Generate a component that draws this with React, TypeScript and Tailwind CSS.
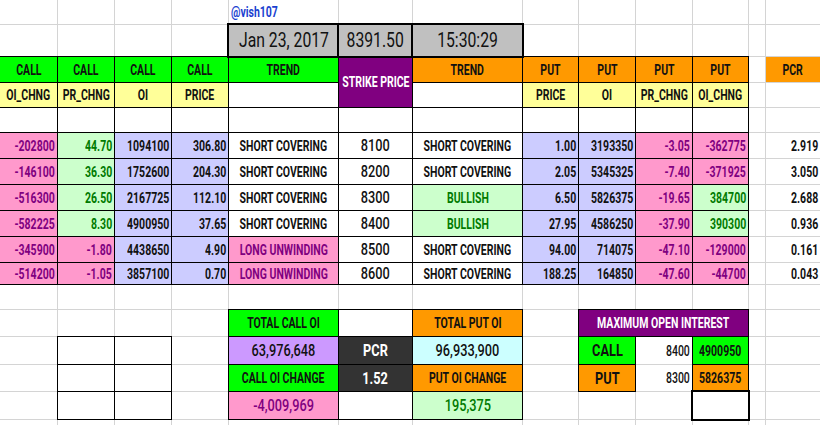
import React from 'react';
import clsx from 'clsx';

type Tone = 'none' | 'white' | 'green' | 'yellow' | 'pink' | 'mint' | 'lav' | 'purple' | 'orange' | 'gray' | 'dark' | 'violet' | 'cyan';
type Ink = 'ink' | 'plum' | 'leaf' | 'snow' | 'link';

interface CellSpec {
    text?: string;
    tone?: Tone;
    ink?: Ink;
    align?: 'l' | 'c' | 'r';
    size?: 'sm' | 'md' | 'lg' | 'xl';
    weight?: 'n' | 'm' | 'b';
    border?: 0 | 1 | 2;
    span?: string;
}

const toneClass: Record<Tone, string> = {
    none: 'bg-white',
    white: 'bg-white',
    green: 'bg-[#00ff00]',
    yellow: 'bg-[#ffff99]',
    pink: 'bg-[#ff99cc]',
    mint: 'bg-[#ccffcc]',
    lav: 'bg-[#ccccff]',
    purple: 'bg-[#800080]',
    orange: 'bg-[#ff9900]',
    gray: 'bg-[#c0c0c0]',
    dark: 'bg-[#333333]',
    violet: 'bg-[#cc99ff]',
    cyan: 'bg-[#ccffff]',
};

const inkClass: Record<Ink, string> = {
    ink: 'text-[#111111]',
    plum: 'text-[#800080]',
    leaf: 'text-[#007a00]',
    snow: 'text-white',
    link: 'text-[#1a3fd0]',
};

const sizeClass = {
    sm: 'text-[14px]',
    md: 'text-[14px]',
    lg: 'text-[17px]',
    xl: 'text-[21px]',
};

const weightClass = {
    n: 'font-normal',
    m: 'font-medium',
    b: 'font-bold',
};

const alignClass = {
    l: 'justify-start',
    c: 'justify-center',
    r: 'justify-end',
};

const originClass = {
    l: 'origin-left',
    c: 'origin-center',
    r: 'origin-right',
};

const borderClass = {
    0: '',
    1: 'ring-1 ring-black',
    2: 'relative z-10 ring-2 ring-black',
};

// the sheet font is a narrow one, so the text is squeezed sideways
const Cell: React.FC<{ spec: CellSpec }> = ({ spec }) => {
    const { text = '', tone = 'none', ink = 'ink', align = 'c', size = 'sm', weight = 'b', border = 0, span } = spec;
    return (
        <div
            className={clsx(
                'flex items-center overflow-hidden whitespace-nowrap px-[2px] leading-none',
                toneClass[tone],
                inkClass[ink],
                sizeClass[size],
                alignClass[align],
                borderClass[border],
                weightClass[weight],
                span
            )}
        >
            {text && <span className={clsx('inline-block shrink-0 scale-x-75', originClass[align])}>{text}</span>}
        </div>
    );
};

const blank = (n: number): CellSpec[] => Array.from({ length: n }, () => ({}));
const boxed = (n: number): CellSpec[] => Array.from({ length: n }, () => ({ tone: 'white' as Tone, border: 1 as const }));

// call side, trend, strike, trend, put side, pcr
const chain = [
    ['-202800', '44.70', '1094100', '306.80', 'SC', '8100', 'SC', '1.00', '3193350', '-3.05', '-362775', '2.919'],
    ['-146100', '36.30', '1752600', '204.30', 'SC', '8200', 'SC', '2.05', '5345325', '-7.40', '-371925', '3.050'],
    ['-516300', '26.50', '2167725', '112.10', 'SC', '8300', 'BU', '6.50', '5826375', '-19.65', '384700', '2.688'],
    ['-582225', '8.30', '4900950', '37.65', 'SC', '8400', 'BU', '27.95', '4586250', '-37.90', '390300', '0.936'],
    ['-345900', '-1.80', '4438650', '4.90', 'LU', '8500', 'SC', '94.00', '714075', '-47.10', '-129000', '0.161'],
    ['-514200', '-1.05', '3857100', '0.70', 'LU', '8600', 'SC', '188.25', '164850', '-47.60', '-44700', '0.043'],
];

const changeCell = (v: string): CellSpec =>
    v.startsWith('-')
        ? { text: v, tone: 'pink', ink: 'plum', align: 'r', border: 1 }
        : { text: v, tone: 'mint', ink: 'leaf', align: 'r', border: 1 };

const trendCell = (code: string): CellSpec => {
    if (code === 'BU') return { text: 'BULLISH', tone: 'mint', ink: 'leaf', border: 1 };
    if (code === 'LU') return { text: 'LONG UNWINDING', tone: 'pink', ink: 'plum', border: 1 };
    return { text: 'SHORT COVERING', tone: 'white', border: 1 };
};

const chainRow = (r: string[]): CellSpec[] => [
    changeCell(r[0]),
    changeCell(r[1]),
    { text: r[2], tone: 'lav', align: 'r', border: 1 },
    { text: r[3], tone: 'lav', align: 'r', border: 1 },
    trendCell(r[4]),
    { text: r[5], tone: 'white', size: 'lg', weight: 'm', border: 1 },
    trendCell(r[6]),
    { text: r[7], tone: 'lav', align: 'r', border: 1 },
    { text: r[8], tone: 'lav', align: 'r', border: 1 },
    changeCell(r[9]),
    changeCell(r[10]),
    {},
    { text: r[11], align: 'r' },
];

const rows: CellSpec[][] = [
    [...blank(4), { text: '@vish107', ink: 'link', align: 'l', size: 'md' }, ...blank(8)],
    [
        ...blank(4),
        { text: 'Jan 23, 2017', tone: 'gray', size: 'xl', weight: 'n', border: 2 },
        { text: '8391.50', tone: 'gray', size: 'xl', weight: 'n', border: 2 },
        { text: '15:30:29', tone: 'gray', size: 'xl', weight: 'n', border: 2 },
        ...blank(6),
    ],
    [
        ...['CALL', 'CALL', 'CALL', 'CALL', 'TREND'].map((t): CellSpec => ({ text: t, tone: 'green', size: 'md', border: 1 })),
        { text: 'STRIKE PRICE', tone: 'purple', ink: 'snow', size: 'md', border: 1, span: 'row-span-2' },
        ...['TREND', 'PUT', 'PUT', 'PUT', 'PUT'].map((t): CellSpec => ({ text: t, tone: 'orange', size: 'md', border: 1 })),
        {},
        { text: 'PCR', tone: 'orange', size: 'md' },
    ],
    [
        ...['OI_CHNG', 'PR_CHNG', 'OI', 'PRICE'].map((t): CellSpec => ({ text: t, tone: 'yellow', size: 'md', border: 1 })),
        { tone: 'white', border: 1 },
        { tone: 'white', border: 1 },
        ...['PRICE', 'OI', 'PR_CHNG', 'OI_CHNG'].map((t): CellSpec => ({ text: t, tone: 'yellow', size: 'md', border: 1 })),
        ...blank(2),
    ],
    [...boxed(11), ...blank(2)],
    ...chain.map(chainRow),
    blank(13),
    [
        ...blank(4),
        { text: 'TOTAL CALL OI', tone: 'green', size: 'md', border: 1 },
        { tone: 'white', border: 1 },
        { text: 'TOTAL PUT OI', tone: 'orange', size: 'md', border: 1 },
        {},
        { text: 'MAXIMUM OPEN INTEREST', tone: 'purple', ink: 'snow', size: 'md', border: 1, span: 'col-span-3' },
        ...blank(2),
    ],
    [
        {},
        ...boxed(2),
        {},
        { text: '63,976,648', tone: 'violet', size: 'lg', weight: 'm', border: 1 },
        { text: 'PCR', tone: 'dark', ink: 'snow', size: 'lg', border: 1 },
        { text: '96,933,900', tone: 'cyan', size: 'lg', weight: 'm', border: 1 },
        {},
        { text: 'CALL', tone: 'green', size: 'lg', border: 1 },
        { text: '8400', align: 'r', size: 'md', weight: 'm' },
        { text: '4900950', tone: 'green', size: 'md', border: 1 },
        ...blank(2),
    ],
    [
        {},
        ...boxed(2),
        {},
        { text: 'CALL OI CHANGE', tone: 'green', size: 'md', border: 1 },
        { text: '1.52', tone: 'dark', ink: 'snow', size: 'lg', border: 1 },
        { text: 'PUT OI CHANGE', tone: 'orange', size: 'md', border: 1 },
        {},
        { text: 'PUT', tone: 'orange', size: 'lg', border: 1 },
        { text: '8300', align: 'r', size: 'md', weight: 'm' },
        { text: '5826375', tone: 'orange', size: 'md', border: 1 },
        ...blank(2),
    ],
    [
        {},
        ...boxed(2),
        {},
        { text: '-4,009,969', tone: 'pink', ink: 'plum', size: 'lg', weight: 'm', border: 1 },
        { tone: 'white', border: 1 },
        { text: '195,375', tone: 'mint', ink: 'leaf', size: 'lg', weight: 'm', border: 1 },
        ...blank(3),
        { tone: 'white', border: 2 },
        ...blank(2),
    ],
    blank(13),
];

export default function App() {
    return (
        <div className="h-[425px] w-[820px] overflow-hidden bg-white font-['Roboto',sans-serif]">
            <div className="grid grid-cols-[57px_56px_56px_56px_109px_73px_109px_55px_56px_56px_55px_16px_54px] grid-rows-[24px_31px_25px_24px_24px_25px_25px_25px_25px_25px_21px_24px_26px_27px_26px_27px_5px] gap-px bg-[#d4d4d4]">
                {rows.flatMap((row, ri) => row.map((spec, ci) => <Cell key={`${ri}-${ci}`} spec={spec} />))}
            </div>
        </div>
    );
}
